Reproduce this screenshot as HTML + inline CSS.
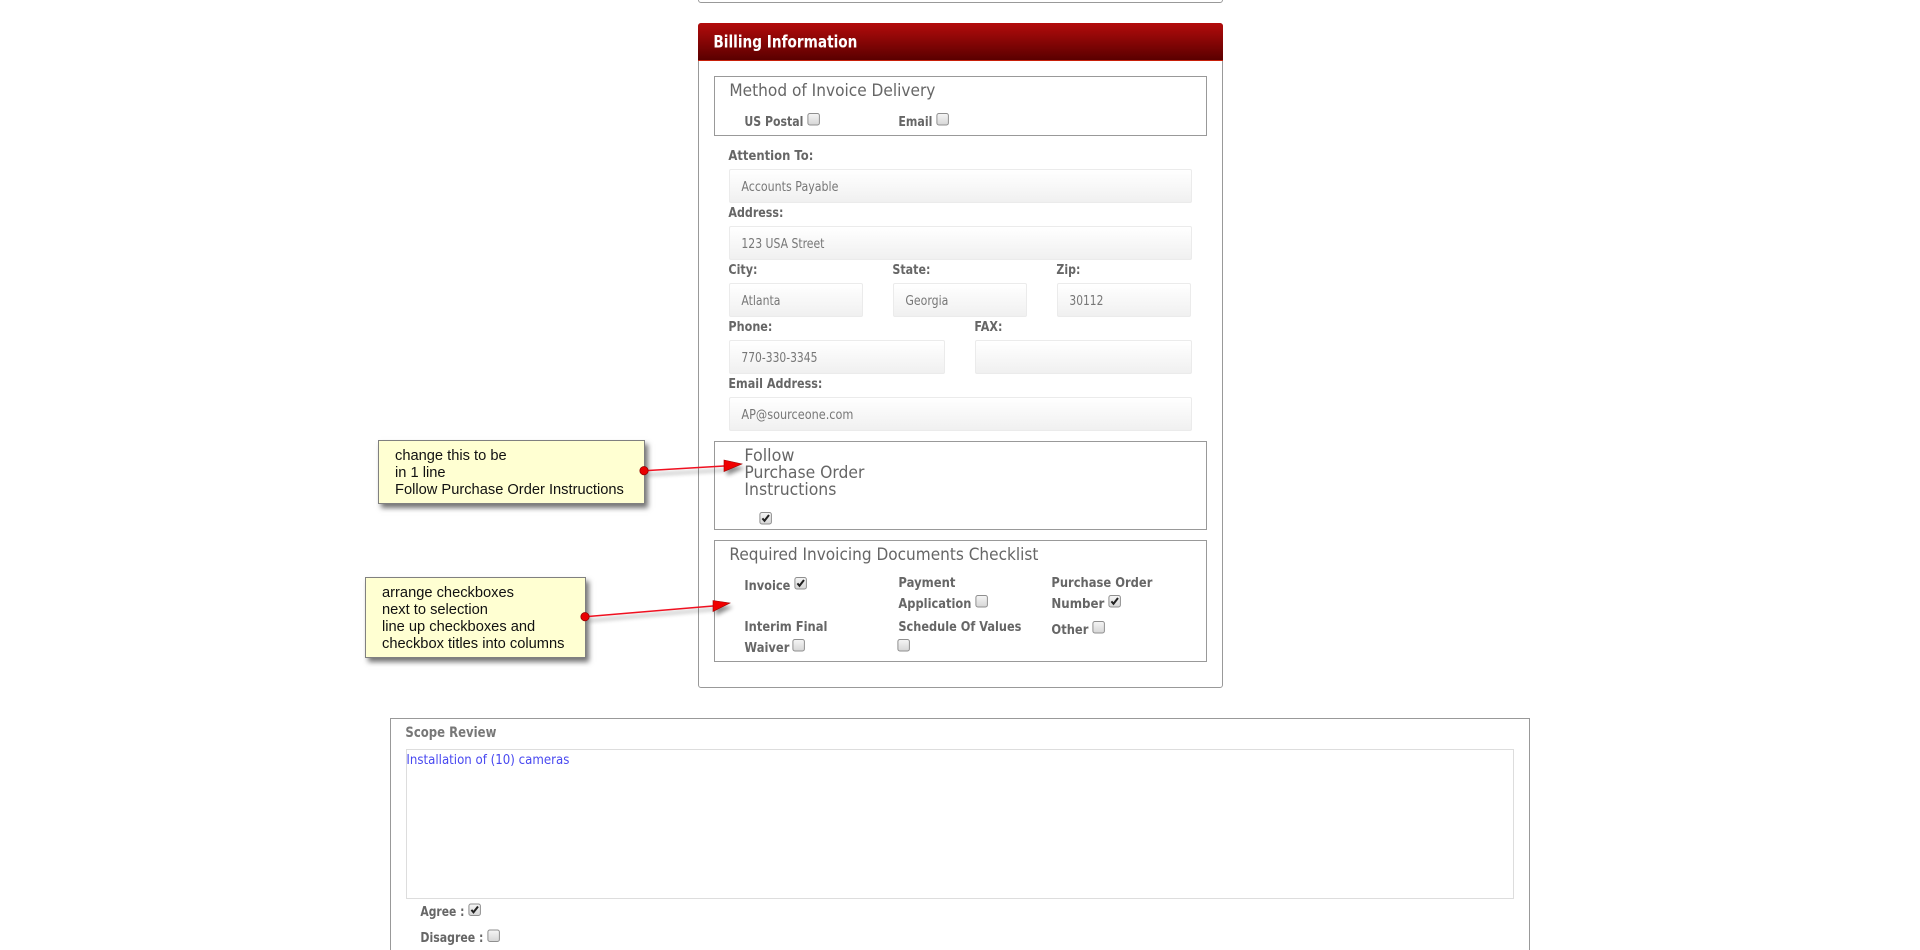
<!DOCTYPE html>
<html lang="en"><head><meta charset="utf-8"><title>Billing Information</title>
<style>
html,body{margin:0;padding:0;background:#fff;width:1920px;height:950px;overflow:hidden}
#page{position:absolute;left:0;top:0;width:1920px;height:950px;overflow:hidden;filter:blur(.3px)}
.b{position:absolute;box-sizing:border-box}
.panel{border:1px solid #999;border-radius:3px;background:#fff}
.head{background:linear-gradient(#b30b0b,#5a0000);border-bottom:1px solid #c8200a;border-radius:3px 3px 0 0}
.fs{border:1px solid #999;background:#fff}
.in{border:1px solid #ebebeb;border-radius:2px;background:linear-gradient(#fff,#f0f0f0)}
.note{background:#ffffd2;border:1px solid #808080;box-shadow:3px 4px 5px rgba(0,0,0,.55)}
svg{position:absolute;left:0;top:0}
text{font-family:"DejaVu Sans","Liberation Sans",sans-serif}
.t{font-size:16.5px;fill:#666}
.l{font-size:13.5px;font-weight:bold;fill:#666}
.v{font-size:13px;fill:#777}
.n{font-family:"Liberation Sans",Arial,sans-serif;font-size:14.67px;fill:#111}
</style></head><body>
<div id="page">
<div class="b panel" style="left:698px;top:-40px;width:525px;height:43px"></div>
<div class="b panel" style="left:698px;top:23px;width:525px;height:665px"></div>
<div class="b head" style="left:698px;top:23px;width:525px;height:38px"></div>
<div class="b fs" style="left:714px;top:76px;width:493px;height:60px"></div>
<div class="b in" style="left:729px;top:169px;width:463px;height:34px"></div>
<div class="b in" style="left:729px;top:226px;width:463px;height:34px"></div>
<div class="b in" style="left:729px;top:283px;width:134px;height:34px"></div>
<div class="b in" style="left:893px;top:283px;width:134px;height:34px"></div>
<div class="b in" style="left:1057px;top:283px;width:134px;height:34px"></div>
<div class="b in" style="left:729px;top:340px;width:216px;height:34px"></div>
<div class="b in" style="left:975px;top:340px;width:217px;height:34px"></div>
<div class="b in" style="left:729px;top:397px;width:463px;height:34px"></div>
<div class="b fs" style="left:714px;top:441px;width:493px;height:89px"></div>
<div class="b fs" style="left:714px;top:540px;width:493px;height:122px"></div>
<div class="b" style="left:390px;top:718px;width:1140px;height:232px;border:1px solid #999;border-bottom:0"></div>
<div class="b" style="left:406px;top:749px;width:1108px;height:150px;border:1px solid #ddd"></div>
<div class="b note" style="left:378px;top:440px;width:267px;height:64px"></div>
<div class="b note" style="left:365px;top:577px;width:221px;height:81px"></div>

<svg width="1920" height="950" viewBox="0 0 1920 950" xmlns="http://www.w3.org/2000/svg">
<defs>
<linearGradient id="cb" x1="0" y1="0" x2="0" y2="1"><stop offset="0" stop-color="#f6f6f6"/><stop offset="1" stop-color="#d6d6d6"/></linearGradient>
<g id="box"><rect x=".5" y=".5" width="11.5" height="11.5" rx="2" fill="url(#cb)" stroke="#8f8f8f"/></g>
<g id="chk"><rect x=".5" y=".5" width="11.5" height="11.5" rx="2" fill="url(#cb)" stroke="#8f8f8f"/><path d="M3 6.4L5.1 8.8L9.6 3" fill="none" stroke="#222" stroke-width="2"/></g>
<filter id="sh" x="-30%" y="-30%" width="170%" height="170%"><feGaussianBlur stdDeviation="2"/></filter>
</defs>

<g transform="translate(-.6,0)">
<text x="714" y="47.5" font-size="17" font-weight="bold" fill="#fff" textLength="144" lengthAdjust="spacingAndGlyphs">Billing Information</text>

<text class="t" x="730" y="96" textLength="206" lengthAdjust="spacingAndGlyphs">Method of Invoice Delivery</text>
<text class="l" x="745" y="126" textLength="59" lengthAdjust="spacingAndGlyphs">US Postal</text>
<use href="#box" x="808" y="113"/>
<text class="l" x="899" y="126" textLength="34" lengthAdjust="spacingAndGlyphs">Email</text>
<use href="#box" x="937" y="113"/>

<text class="l" x="729" y="160" textLength="85" lengthAdjust="spacingAndGlyphs">Attention To:</text>
<text class="v" x="742" y="191" textLength="97" lengthAdjust="spacingAndGlyphs">Accounts Payable</text>
<text class="l" x="729" y="217" textLength="55" lengthAdjust="spacingAndGlyphs">Address:</text>
<text class="v" x="742" y="248" textLength="83" lengthAdjust="spacingAndGlyphs">123 USA Street</text>
<text class="l" x="729" y="274" textLength="29" lengthAdjust="spacingAndGlyphs">City:</text>
<text class="v" x="742" y="305" textLength="39" lengthAdjust="spacingAndGlyphs">Atlanta</text>
<text class="l" x="893" y="274" textLength="38" lengthAdjust="spacingAndGlyphs">State:</text>
<text class="v" x="906" y="305" textLength="43" lengthAdjust="spacingAndGlyphs">Georgia</text>
<text class="l" x="1057" y="274" textLength="24" lengthAdjust="spacingAndGlyphs">Zip:</text>
<text class="v" x="1070" y="305" textLength="34" lengthAdjust="spacingAndGlyphs">30112</text>
<text class="l" x="729" y="331" textLength="44" lengthAdjust="spacingAndGlyphs">Phone:</text>
<text class="v" x="742" y="362" textLength="76" lengthAdjust="spacingAndGlyphs">770-330-3345</text>
<text class="l" x="975" y="331" textLength="28" lengthAdjust="spacingAndGlyphs">FAX:</text>
<text class="l" x="729" y="388" textLength="94" lengthAdjust="spacingAndGlyphs">Email Address:</text>
<text class="v" x="742" y="419" textLength="112" lengthAdjust="spacingAndGlyphs">AP@sourceone.com</text>

<text class="t" x="745" y="461" textLength="50" lengthAdjust="spacingAndGlyphs">Follow</text>
<text class="t" x="745" y="478" textLength="120" lengthAdjust="spacingAndGlyphs">Purchase Order</text>
<text class="t" x="745" y="495" textLength="92" lengthAdjust="spacingAndGlyphs">Instructions</text>
<use href="#chk" x="760" y="512"/>

<text class="t" x="730" y="560" textLength="309" lengthAdjust="spacingAndGlyphs">Required Invoicing Documents Checklist</text>
<text class="l" x="745" y="590" textLength="46" lengthAdjust="spacingAndGlyphs">Invoice</text>
<use href="#chk" x="795" y="577"/>
<text class="l" x="899" y="587" textLength="57" lengthAdjust="spacingAndGlyphs">Payment</text>
<text class="l" x="899" y="608" textLength="73" lengthAdjust="spacingAndGlyphs">Application</text>
<use href="#box" x="976" y="595"/>
<text class="l" x="1052" y="587" textLength="101" lengthAdjust="spacingAndGlyphs">Purchase Order</text>
<text class="l" x="1052" y="608" textLength="53" lengthAdjust="spacingAndGlyphs">Number</text>
<use href="#chk" x="1109" y="595"/>
<text class="l" x="745" y="631" textLength="83" lengthAdjust="spacingAndGlyphs">Interim Final</text>
<text class="l" x="745" y="652" textLength="45" lengthAdjust="spacingAndGlyphs">Waiver</text>
<use href="#box" x="793" y="639"/>
<text class="l" x="899" y="631" textLength="123" lengthAdjust="spacingAndGlyphs">Schedule Of Values</text>
<use href="#box" x="898" y="639"/>
<text class="l" x="1052" y="634" textLength="37" lengthAdjust="spacingAndGlyphs">Other</text>
<use href="#box" x="1093" y="621"/>

<text x="406" y="737" font-size="14.5" font-weight="bold" fill="#777" textLength="91" lengthAdjust="spacingAndGlyphs">Scope Review</text>
<text x="407" y="764" font-size="13.5" fill="#4848f0" textLength="163" lengthAdjust="spacingAndGlyphs">Installation of (10) cameras</text>
<text class="l" x="421" y="916" textLength="44" lengthAdjust="spacingAndGlyphs">Agree :</text>
<use href="#chk" x="469" y="903.5"/>
<text class="l" x="421" y="942" textLength="63" lengthAdjust="spacingAndGlyphs">Disagree :</text>
<use href="#box" x="488" y="929.5"/>
</g>

<text class="n" x="395" y="460">change this to be</text>
<text class="n" x="395" y="477">in 1 line</text>
<text class="n" x="395" y="494">Follow Purchase Order Instructions</text>
<text class="n" x="382" y="597">arrange checkboxes</text>
<text class="n" x="382" y="614">next to selection</text>
<text class="n" x="382" y="631">line up checkboxes and</text>
<text class="n" x="382" y="648">checkbox titles into columns</text>

<g opacity=".45" filter="url(#sh)" transform="translate(3,4)">
<path d="M644 470.7L723 466" stroke="#000" stroke-width="1.5" fill="none"/>
<path d="M724 460L742 464L724 471.5Z"/>
<path d="M585 616.7L713 605" stroke="#000" stroke-width="1.5" fill="none"/>
<path d="M713 600.5L730 603L713 611.5Z"/>
</g>
<path d="M644 470.7L724 466" stroke="#f01020" stroke-width="1.5" fill="none"/>
<path d="M724 460L742 464L724 471.5Z" fill="#f00000" stroke="#a00000" stroke-width=".6"/>
<circle cx="644" cy="470.7" r="4.2" fill="#e80000" stroke="#900000" stroke-width=".7"/>
<path d="M585 616.7L713 606" stroke="#f01020" stroke-width="1.5" fill="none"/>
<path d="M713 600.5L730 603L713 611.5Z" fill="#f00000" stroke="#a00000" stroke-width=".6"/>
<circle cx="585" cy="616.7" r="4.2" fill="#e80000" stroke="#900000" stroke-width=".7"/>
</svg>
</div>
</body></html>
